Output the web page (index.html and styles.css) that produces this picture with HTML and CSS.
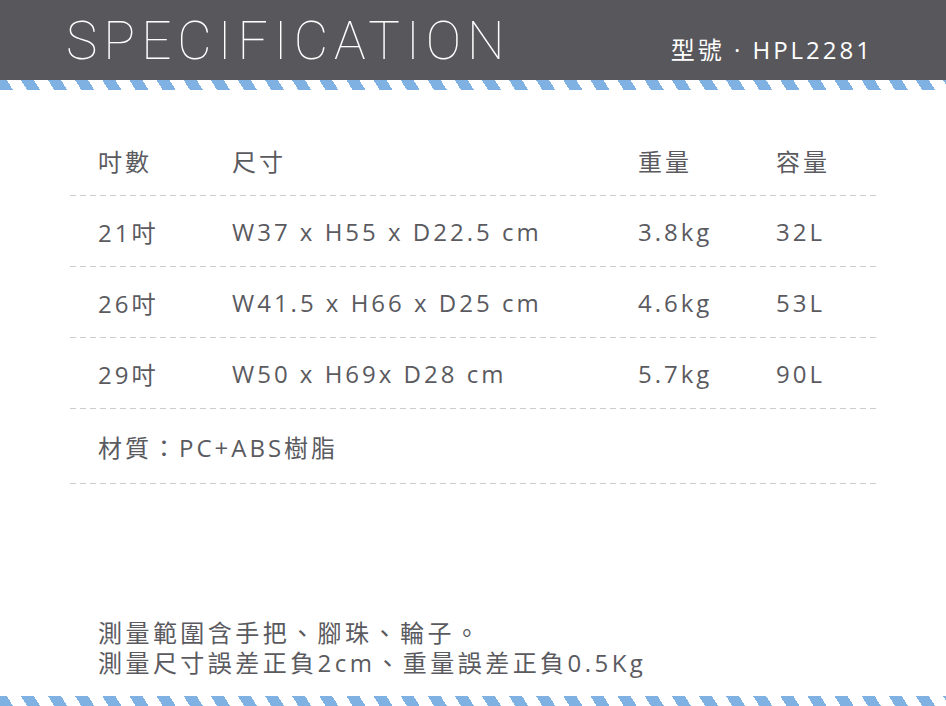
FILE: index.html
```html
<!DOCTYPE html>
<html lang="zh-Hant">
<head>
<meta charset="utf-8">
<link rel="stylesheet" href="styles.css">
</head>
<body>
<div class="page">
  <header class="header">
    <h1 class="title">SPECIFICATION</h1>
    <div class="model">型號 · HPL2281</div>
  </header>
  <div class="stripe"></div>
  <section class="specs">
    <div class="row head">
      <div>吋數</div><div>尺寸</div><div>重量</div><div>容量</div>
    </div>
    <div class="row">
      <div>21吋</div><div>W37 x H55 x D22.5 cm</div><div>3.8kg</div><div>32L</div>
    </div>
    <div class="row">
      <div>26吋</div><div>W41.5 x H66 x D25 cm</div><div>4.6kg</div><div>53L</div>
    </div>
    <div class="row">
      <div>29吋</div><div>W50 x H69x D28 cm</div><div>5.7kg</div><div>90L</div>
    </div>
    <div class="row material">
      <div>材質：PC+ABS樹脂</div>
    </div>
  </section>
  <div class="note">
    <p>測量範圍含手把、腳珠、輪子。</p>
    <p>測量尺寸誤差正負2cm、重量誤差正負0.5Kg</p>
  </div>
  <div class="stripe bottom"></div>
</div>
</body>
</html>
```
FILE: styles.css
```css
* { box-sizing: border-box; margin: 0; padding: 0; }
html, body { background: #fff; }
body {
  width: 946px;
  height: 706px;
  overflow: hidden;
  font-family: "Open Sans", "Noto Sans CJK TC", sans-serif;
  color: #5a5a5f;
}
.page {
  width: 946px;
  height: 706px;
  display: flex;
  flex-direction: column;
}
.header {
  height: 80px;
  background: #58575c;
  display: flex;
  justify-content: space-between;
  align-items: flex-end;
  padding: 0 73px 0 66px;
}
.title {
  font-family: "Roboto", sans-serif;
  font-weight: 100;
  font-size: 53px;
  line-height: 1;
  letter-spacing: 6px;
  color: #fff;
  padding-bottom: 12px;
}
.model {
  font-size: 24px;
  letter-spacing: 3px;
  color: #fff;
  line-height: 1;
  padding-bottom: 18px;
}
.stripe {
  height: 10px;
  background: repeating-linear-gradient(58deg, #7fb2e2 0 11px, #fff 11px 23px);
}
.specs {
  margin: 35px 70px 0;
}
.row {
  display: grid;
  grid-template-columns: 134px 406px 138px 1fr;
  padding-left: 28px;
  height: 71px;
  align-items: center;
  font-size: 24px;
  letter-spacing: 3px;
  background: repeating-linear-gradient(to right, #cdcdcd 0 6px, transparent 6px 10px) bottom left / 100% 1px no-repeat;
}
.row.material {
  height: 75px;
  grid-template-columns: 1fr;
}
.note {
  margin-top: auto;
  margin-bottom: 18px;
  padding-left: 98px;
  font-size: 24px;
  letter-spacing: 3.45px;
  line-height: 30px;
}
.stripe.bottom {
  height: 10px;
}
```
